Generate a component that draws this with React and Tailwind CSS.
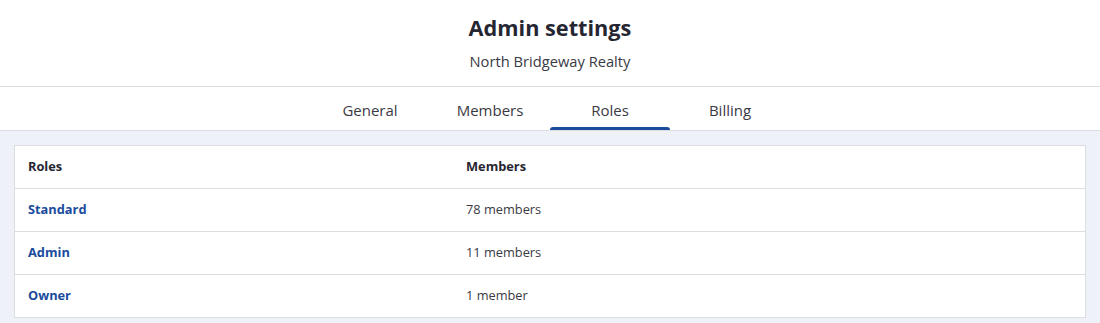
const TABS = ["General", "Members", "Roles", "Billing"];

const ROLES = [
  { name: "Standard", members: "78 members" },
  { name: "Admin", members: "11 members" },
  { name: "Owner", members: "1 member" },
];

export default function App() {
  const active = "Roles";

  return (
    <div className="min-h-[323px] bg-[#eef1f8] font-['Open_Sans',sans-serif] text-[#2b2b36]">
      {/* Header */}
      <div className="bg-white border-b border-[#dcdde2] h-[87px] flex flex-col items-center">
        <h1 className="text-[21.7px] font-bold leading-[28px] mt-[14px] text-[#262633]">
          Admin settings
        </h1>
        <p className="text-[14.7px] leading-[20px] mt-[9px] text-[#3a3a44]">
          North Bridgeway Realty
        </p>
      </div>

      {/* Tabs */}
      <div className="bg-white border-b border-[#dcdde2] h-[44px] flex justify-center">
        {TABS.map((t) => (
          <div
            key={t}
            className="relative w-[120px] flex justify-center pt-[13px] text-[15px] leading-[20px] text-[#3a3a44]"
          >
            {t}
            {t === active && (
              <span className="absolute bottom-0 left-0 right-0 h-[3px] rounded-t-[3px] bg-[#1a4b9c]" />
            )}
          </div>
        ))}
      </div>

      {/* Table */}
      <div className="px-[14px] pt-[14px] pb-[6px]">
        <div className="bg-white border border-[#dcdde2]">
          <div className="grid grid-cols-[438px_1fr] h-[42px] items-center px-[13px] text-[12.8px] font-bold text-[#262633]">
            <div>Roles</div>
            <div>Members</div>
          </div>
          {ROLES.map((r) => (
            <div
              key={r.name}
              className="grid grid-cols-[438px_1fr] h-[43px] items-center px-[13px] border-t border-[#dcdde2] text-[12.8px]"
            >
              <div className="font-bold text-[#1a4b9c]">{r.name}</div>
              <div className="text-[#3a3a44]">{r.members}</div>
            </div>
          ))}
        </div>
      </div>
    </div>
  );
}
